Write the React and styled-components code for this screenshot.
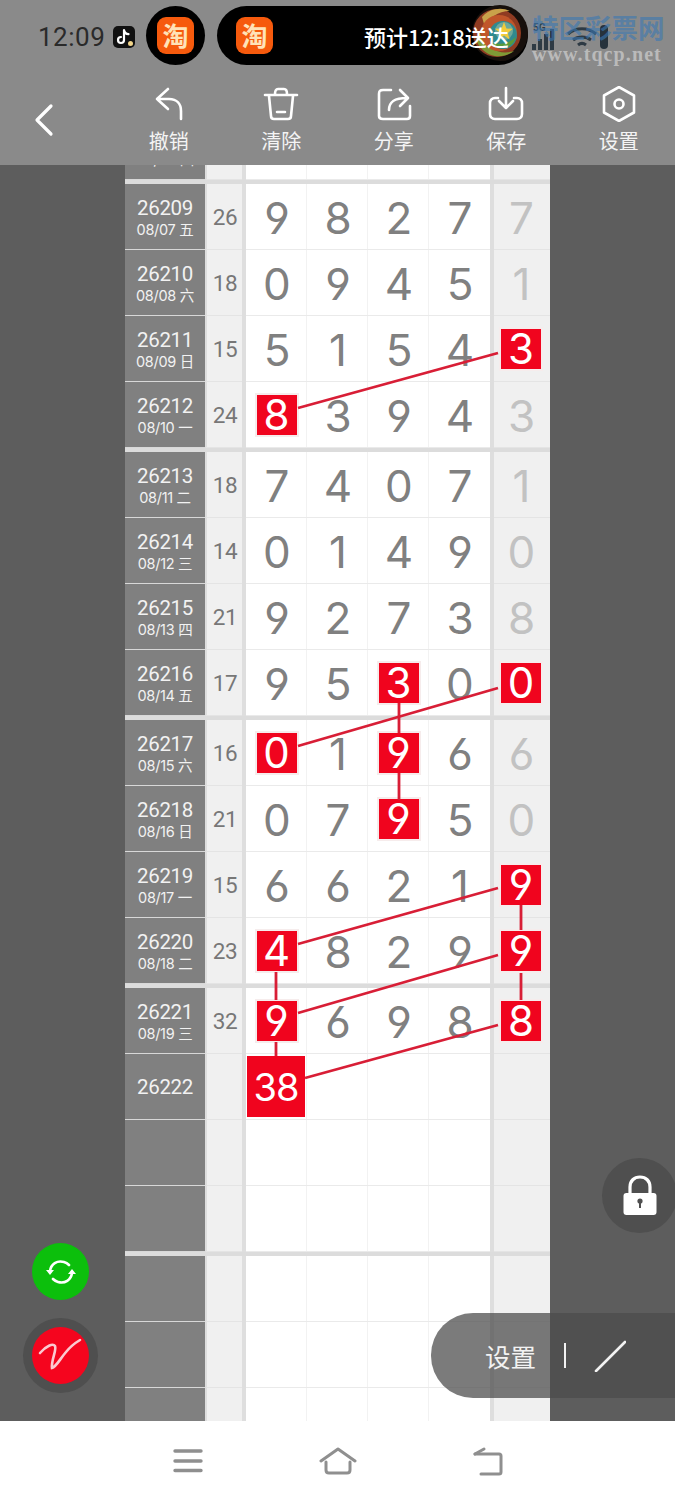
import React from "react";
import styled, { createGlobalStyle } from "styled-components";

const Global = createGlobalStyle`
  html, body { margin: 0; padding: 0; background: #fff; }
  body { font-family: Inter, "Noto Sans CJK SC", sans-serif; }
`;

const Screen = styled.div`
  width: 675px;
  height: 1500px;
  display: flex;
  flex-direction: column;
  overflow: hidden;
`;

const Header = styled.header`
  height: 165px;
  flex: none;
  background: #8a8a8a;
  display: flex;
  flex-direction: column;
  position: relative;
  z-index: 3;
`;

const StatusBar = styled.div`
  height: 75px;
  display: flex;
  align-items: flex-start;
  padding: 6px 0 0 38px;
  box-sizing: border-box;
`;

const Clock = styled.span`
  font: 400 26px/62px Roboto, sans-serif;
  color: #2a2a2a;
  width: 75px;
  letter-spacing: 0.5px;
`;

const TikTok = styled.span`
  width: 22px;
  height: 22px;
  margin-top: 20px;
  border-radius: 5px;
  background: #111;
  display: flex;
  align-items: center;
  justify-content: center;
`;

const AppCircle = styled.span`
  width: 59px;
  height: 59px;
  margin-left: 11px;
  border-radius: 50%;
  background: #000;
  display: flex;
  align-items: center;
  justify-content: center;
`;

const Taobao = styled.span`
  width: 37px;
  height: 37px;
  border-radius: 9px;
  background: #f65a0d;
  color: #ffe3b8;
  font: 700 26px/36px "Noto Sans CJK SC", sans-serif;
  text-align: center;
`;

const Capsule = styled.div`
  width: 311px;
  height: 59px;
  margin-left: 12px;
  border-radius: 30px;
  background: #000;
  display: flex;
  align-items: center;
  padding-left: 19px;
  box-sizing: border-box;
`;

const Eta = styled.span`
  margin-left: 91px;
  font: 500 22px/1 "Noto Sans CJK SC", sans-serif;
  color: #fff;
  white-space: nowrap;
  position: relative;
  z-index: 1;
`;

const SiteLogo = styled.svg`
  position: absolute;
  left: 472px;
  top: 5px;
`;

const StatusIcons = styled.svg`
  position: absolute;
  left: 530px;
  top: 20px;
`;

const Watermark = styled.div`
  position: absolute;
  left: 532px;
  top: 12px;
  width: 140px;
`;

const WatermarkTitle = styled.div`
  font: 700 26.5px/30px "Noto Sans CJK SC", sans-serif;
  color: rgba(58, 120, 180, 0.62);
  white-space: nowrap;
`;

const WatermarkUrl = styled.div`
  font: 700 20px/24px "Liberation Serif", serif;
  color: rgba(196, 196, 196, 0.85);
  letter-spacing: 1.1px;
  white-space: nowrap;
`;

const Toolbar = styled.nav`
  flex: 1;
  display: grid;
  grid-template-columns: repeat(6, 1fr);
`;

const BackButton = styled.div`
  display: flex;
  align-items: center;
  padding: 0 0 0 34px;
  height: 90px;
`;

const ToolItem = styled.div`
  display: flex;
  flex-direction: column;
  align-items: center;
  padding-top: 11px;
  color: #f4f4f4;
  font: 400 20px/26px "Noto Sans CJK SC", sans-serif;
`;

const ToolIcon = styled.svg`
  display: block;
  margin-bottom: 6px;
`;

const Board = styled.main`
  flex: none;
  height: 1256px;
  background: #5d5d5d;
  position: relative;
  overflow: hidden;
`;

const Sheet = styled.div`
  width: 425px;
  margin: -51px 0 0 125px;
  background: #fff;
`;

const Group = styled.section`
  border-top: 4px solid #dcdcdc;
  &:first-child { border-top: 0; }
`;

const Row = styled.div`
  height: 66px;
  display: grid;
  grid-template-columns: 80px 37px 4px repeat(4, 61px) 4px 1fr;
  box-sizing: border-box;
`;

const Label = styled.div`
  background: #808080;
  border-bottom: 1px solid #d8d8d8;
  padding-top: 2px;
  display: flex;
  flex-direction: column;
  align-items: center;
  justify-content: center;
  color: #f2f2f2;
`;

const Issue = styled.div`
  font: 400 20.5px/25px Roboto, sans-serif;
  letter-spacing: -0.3px;
`;

const DateText = styled.div`
  font: 400 14.5px/18px Inter, "Noto Sans CJK SC", sans-serif;
  letter-spacing: -0.3px;
  white-space: nowrap;
`;

const Sum = styled.div`
  background: #f0f0f0;
  border-left: 2px solid #dedede;
  border-bottom: 1px solid #e4e4e4;
  padding: 2px 0 0 1px;
  display: flex;
  align-items: center;
  justify-content: center;
  color: #777;
  font: 400 22.5px/1 Roboto, sans-serif;
  letter-spacing: -0.3px;
`;

const Rule = styled.div`
  background: #dedede;
`;

const Cell = styled.div`
  position: relative;
  display: flex;
  align-items: center;
  justify-content: center;
  padding: ${(p) => (p.$tail ? "2px 1px 0 0" : "2px 0 0 1px")};
  background: ${(p) => (p.$tail ? "#f0f0f0" : "#fff")};
  border-bottom: 1px solid ${(p) => (p.$tail ? "#e4e4e4" : "#eaeaea")};
  box-shadow: ${(p) => (p.$edge ? "none" : "inset -1px 0 0 #f2f2f2")};
  color: ${(p) => (p.$tail ? "#c2c2c2" : "#808080")};
  font: 400 44px/1 Inter, sans-serif;
  font-feature-settings: "cv03", "cv04";
`;

const Hit = styled.span`
  width: 40px;
  height: 40px;
  margin: -2px 0 0 -1px;
  background: #f0041e;
  box-shadow: 0 0 0 2px #f6ecec;
  color: #fff;
  display: flex;
  align-items: center;
  justify-content: center;
  font: 400 42px/1 Inter, sans-serif;
  font-feature-settings: "cv03", "cv04";
  position: relative;
  z-index: 1;
`;

const BigHit = styled.span`
  position: absolute;
  left: 1px;
  top: 2px;
  width: 58px;
  height: 61px;
  background: #f0041e;
  color: #fff;
  display: flex;
  align-items: center;
  justify-content: center;
  font: 400 38px/1 Inter, sans-serif;
  letter-spacing: -1px;
  z-index: 1;
`;

const Links = styled.svg`
  position: absolute;
  left: 0;
  top: 0;
  z-index: 2;
  pointer-events: none;
`;

const RoundButton = styled.div`
  position: absolute;
  z-index: 3;
  left: ${(p) => p.$left}px;
  top: ${(p) => p.$top}px;
  width: 57px;
  height: 57px;
  border-radius: 50%;
  background: ${(p) => p.$bg};
  box-shadow: ${(p) => (p.$ring ? "0 0 0 9px #4f4f4f" : "none")};
  display: flex;
  align-items: center;
  justify-content: center;
`;

const LockButton = styled.div`
  position: absolute;
  z-index: 3;
  right: -2px;
  top: 993px;
  width: 75px;
  height: 75px;
  border-radius: 50%;
  background: #4f4f4f;
  display: flex;
  align-items: center;
  justify-content: center;
`;

const SettingsPill = styled.div`
  position: absolute;
  z-index: 3;
  left: 431px;
  right: 0;
  top: 1148px;
  height: 85px;
  border-radius: 42px 0 0 42px;
  background: rgba(75, 75, 75, 0.735);
  display: flex;
  align-items: center;
  padding-left: 54px;
  color: #f2f2f2;
  font: 400 25.5px/1 "Noto Sans CJK SC", sans-serif;
`;

const PillDivider = styled.span`
  width: 2px;
  height: 25px;
  background: #f2f2f2;
  margin: 0 28px 0 28px;
`;

const BottomNav = styled.footer`
  flex: 1;
  background: #fff;
  display: grid;
  grid-template-columns: repeat(3, 150px);
  justify-content: center;
  align-items: center;
  justify-items: center;
`;

const week = ["五", "六", "日", "一", "二", "三", "四"];
const rows = [
  ["26208", "08/06 四", "", ["", "", "", "3"], "3"],
  ["26209", 0, 26, [9, 8, 2, 7], 7],
  ["26210", 1, 18, [0, 9, 4, 5], 1],
  ["26211", 2, 15, [5, 1, 5, 4], "*3"],
  ["26212", 3, 24, ["*8", 3, 9, 4], 3],
  ["26213", 4, 18, [7, 4, 0, 7], 1],
  ["26214", 5, 14, [0, 1, 4, 9], 0],
  ["26215", 6, 21, [9, 2, 7, 3], 8],
  ["26216", 7, 17, [9, 5, "*3", 0], "*0"],
  ["26217", 8, 16, ["*0", 1, "*9", 6], 6],
  ["26218", 9, 21, [0, 7, "*9", 5], 0],
  ["26219", 10, 15, [6, 6, 2, 1], "*9"],
  ["26220", 11, 23, ["*4", 8, 2, 9], "*9"],
  ["26221", 12, 32, ["*9", 6, 9, 8], "*8"],
  ["26222", null, "", ["#38", "", "", ""], ""],
  ["", null, "", ["", "", "", ""], ""],
  ["", null, "", ["", "", "", ""], ""],
  ["", null, "", ["", "", "", ""], ""],
  ["", null, "", ["", "", "", ""], ""],
  ["", null, "", ["", "", "", ""], ""],
];

const dateOf = (i) => {
  if (typeof i === "string") return i;
  if (i === null) return "";
  const d = 7 + i;
  return `08/${String(d).padStart(2, "0")} ${week[i % 7]}`;
};

const Value = ({ v }) => {
  const s = String(v);
  if (s.startsWith("*")) return <Hit>{s.slice(1)}</Hit>;
  if (s.startsWith("#")) return <BigHit>{s.slice(1)}</BigHit>;
  return s;
};

const SheetRow = ({ row }) => {
  const [issue, date, sum, nums, tail] = row;
  const label = dateOf(date);
  return (
    <Row>
      <Label>
        {issue && <Issue>{issue}</Issue>}
        {label && <DateText>{label}</DateText>}
      </Label>
      <Sum>{sum}</Sum>
      <Rule />
      {nums.map((n, i) => (
        <Cell key={i} $edge={i === 3}>
          <Value v={n} />
        </Cell>
      ))}
      <Rule />
      <Cell $tail $edge>
        <Value v={tail} />
      </Cell>
    </Row>
  );
};

const groups = [rows.slice(0, 1), rows.slice(1, 5), rows.slice(5, 9), rows.slice(9, 13), rows.slice(13, 17), rows.slice(17, 20)];

const linkSegments = [
  [498, 353, 298, 408],
  [498, 688, 298, 746],
  [399, 703, 399, 733],
  [399, 773, 399, 800],
  [498, 888, 298, 944],
  [521, 905, 521, 930],
  [498, 955, 298, 1013],
  [521, 973, 521, 1000],
  [498, 1025, 305, 1078],
  [276, 972, 276, 1000],
  [276, 1042, 276, 1056],
];

const stroke = { fill: "none", stroke: "#fff", strokeWidth: 2.6, strokeLinecap: "round", strokeLinejoin: "round" };

const tools = [
  ["撤销", <path key="a" d="M17 3 6 13l11 10M6 13h12c8 0 12 5 12 12v8" />],
  ["清除", <path key="a" d="M2 9h32M12 8c0-3 1-5 3-5h6c2 0 3 2 3 5M6 10l2 20c0 2 1 3 3 3h14c2 0 3-1 3-3l2-20M14 26h8" />],
  ["分享", <path key="a" d="M15 4H7C4 4 3 5 3 8v22c0 2 1 3 4 3h24c2 0 3-1 3-3V20M13 24c0-8 5-12 18-12M24 4l8 8-8 8" />],
  ["保存", <path key="a" d="M10 12H7c-3 0-5 2-5 5v11c0 3 2 5 5 5h22c3 0 5-2 5-5V17c0-3-2-5-5-5h-3M18 2v20M11 15l7 7 7-7" />],
  ["设置", <><path key="a" d="m18 1 15 8.500v17L18 35 3 26.500v-17z" /><circle key="b" cx="18" cy="18" r="4.500" /></>],
];

export default function App() {
  return (
    <Screen>
      <Global />
      <Header>
        <StatusBar>
          <Clock>12:09</Clock>
          <TikTok>
            <svg width="18" height="18" viewBox="0 0 18 18">
              <path d="M9 2v10a3 3 0 1 1-3-3M9 2c.4 2.600 2 4 4.500 4.200" fill="none" stroke="#fff" strokeWidth="2.200" strokeLinecap="round" />
              <circle cx="15.500" cy="15.500" r="2.500" fill="#f2d58a" />
            </svg>
          </TikTok>
          <AppCircle><Taobao>淘</Taobao></AppCircle>
          <Capsule>
            <Taobao>淘</Taobao>
            <Eta>预计12:18送达</Eta>
          </Capsule>
        </StatusBar>
        <SiteLogo width="56" height="56" viewBox="0 0 56 56">
          <circle cx="28" cy="28" r="28" fill="#17100c" />
          <circle cx="25" cy="28" r="24" fill="#8f3b22" />
          <path d="M4 34a24 24 0 0 0 38 12C30 50 14 46 8 28z" fill="#7f9a36" />
          <path d="M10 12a24 24 0 0 1 28-6C26 6 16 12 14 26z" fill="#c9a24a" />
          <circle cx="27" cy="28" r="18" fill="#c0562a" />
          <circle cx="31" cy="30" r="14" fill="#2f8a8f" />
          <path d="M20 38a14 14 0 0 0 24-6c-6 6-16 8-24 6z" fill="#5a9a3a" />
          <circle cx="32" cy="26" r="9" fill="#e8e0b0" opacity="0.35" />
          <path d="m32 17 2.400 6.500 6.600.3-5.200 4.100 1.800 6.500-5.600-3.800-5.600 3.800 1.800-6.500-5.200-4.100 6.600-.3z" fill="#f2cb3a" />
        </SiteLogo>
        <StatusIcons width="110" height="34" viewBox="0 0 110 34">
          <text x="3" y="11" fontFamily="Roboto, sans-serif" fontSize="10" fontWeight="700" fill="#2e3a44">5G</text>
          <path d="M2 24h4v6H2zM8 19h4v11H8zM14 14h4v16h-4zM20 9h4v21h-4z" fill="#2e3a44" />
          <path d="M38 14c8-7 20-7 28 0M43 20c5-4 13-4 18 0M48 25c2.500-2 5.500-2 8 0" fill="none" stroke="#2e3a44" strokeWidth="3" />
          <rect x="70" y="5" width="8" height="24" rx="4" fill="#26323c" />
        </StatusIcons>
        <Watermark>
          <WatermarkTitle>特区彩票网</WatermarkTitle>
          <WatermarkUrl>www.tqcp.net</WatermarkUrl>
        </Watermark>
        <Toolbar>
          <BackButton>
            <svg width="20" height="34" viewBox="0 0 20 34">
              <path d="M17 3 3 17l14 14" {...stroke} strokeWidth="3.200" />
            </svg>
          </BackButton>
          {tools.map(([name, icon]) => (
            <ToolItem key={name}>
              <ToolIcon width="36" height="36" viewBox="0 0 36 36" {...stroke}>{icon}</ToolIcon>
              {name}
            </ToolItem>
          ))}
        </Toolbar>
      </Header>
      <Board>
        <Sheet>
          {groups.map((g, i) => (
            <Group key={i}>
              {g.map((r, j) => <SheetRow key={j} row={r} />)}
            </Group>
          ))}
        </Sheet>
        <Links width="675" height="1256" viewBox="0 165 675 1256">
          {linkSegments.map(([a, b, c, d], i) => (
            <line key={i} x1={a} y1={b} x2={c} y2={d} stroke="#d81e36" strokeWidth="2.800" />
          ))}
        </Links>
        <RoundButton $left={32} $top={1078} $bg="#0cbf0c">
          <svg width="32" height="28" viewBox="0 0 32 28" fill="none" stroke="#fff" strokeWidth="2.600" strokeLinecap="round">
            <path d="M5 13C6 6 12 2 19 4c2 .6 4 2 5 3M27 15c-1 7-7 11-14 9-2-.6-4-2-5-3" />
            <path d="m1 12 4 5 4-5zM23 16l4-5 4 5z" fill="#fff" stroke="none" />
          </svg>
        </RoundButton>
        <RoundButton $left={32} $top={1162} $bg="#f5051e" $ring>
          <svg width="46" height="36" viewBox="0 0 46 36" fill="none" stroke="#fbc9d0" strokeWidth="2.600" strokeLinecap="round">
            <path d="M2 15C8 8 15 5 17 8c2 4-4 14-3 22 4-1 8-9 14-16 4-5 9-9 14-12" />
          </svg>
        </RoundButton>
        <LockButton>
          <svg width="34" height="42" viewBox="0 0 34 42">
            <path d="M7 20v-8c0-6 4-10 10-10s10 4 10 10v8" fill="none" stroke="#fff" strokeWidth="3.200" />
            <rect x="0.500" y="18" width="33" height="22" rx="3" fill="#fff" />
            <circle cx="17" cy="26" r="2.600" fill="#4f4f4f" />
            <rect x="16" y="27" width="2" height="6" fill="#4f4f4f" />
          </svg>
        </LockButton>
        <SettingsPill>
          设置
          <PillDivider />
          <svg width="32" height="32" viewBox="0 0 32 32">
            <path d="M2 31 31 2" stroke="#f2f2f2" strokeWidth="2.600" strokeLinecap="round" />
          </svg>
        </SettingsPill>
      </Board>
      <BottomNav>
        <svg width="30" height="26" viewBox="0 0 30 26" fill="none" stroke="#8f8f8f" strokeWidth="3.400" strokeLinecap="round">
          <path d="M2 3h26M2 13h26M2 22.500h26" />
        </svg>
        <svg width="38" height="28" viewBox="0 0 38 28" fill="none" stroke="#8f8f8f" strokeWidth="3" strokeLinecap="round" strokeLinejoin="round">
          <path d="M2 14 19 2l17 12M7 15v8c0 2 1 3 3 3h18c2 0 3-1 3-3v-8" />
        </svg>
        <svg width="32" height="30" viewBox="0 0 32 30" fill="none" stroke="#8f8f8f" strokeWidth="3" strokeLinecap="round" strokeLinejoin="round">
          <path d="M3 8h24c1.500 0 2 .5 2 2v16c0 1.500-.5 2-2 2H9" />
          <path d="m3 8 9-5" />
        </svg>
      </BottomNav>
    </Screen>
  );
}
